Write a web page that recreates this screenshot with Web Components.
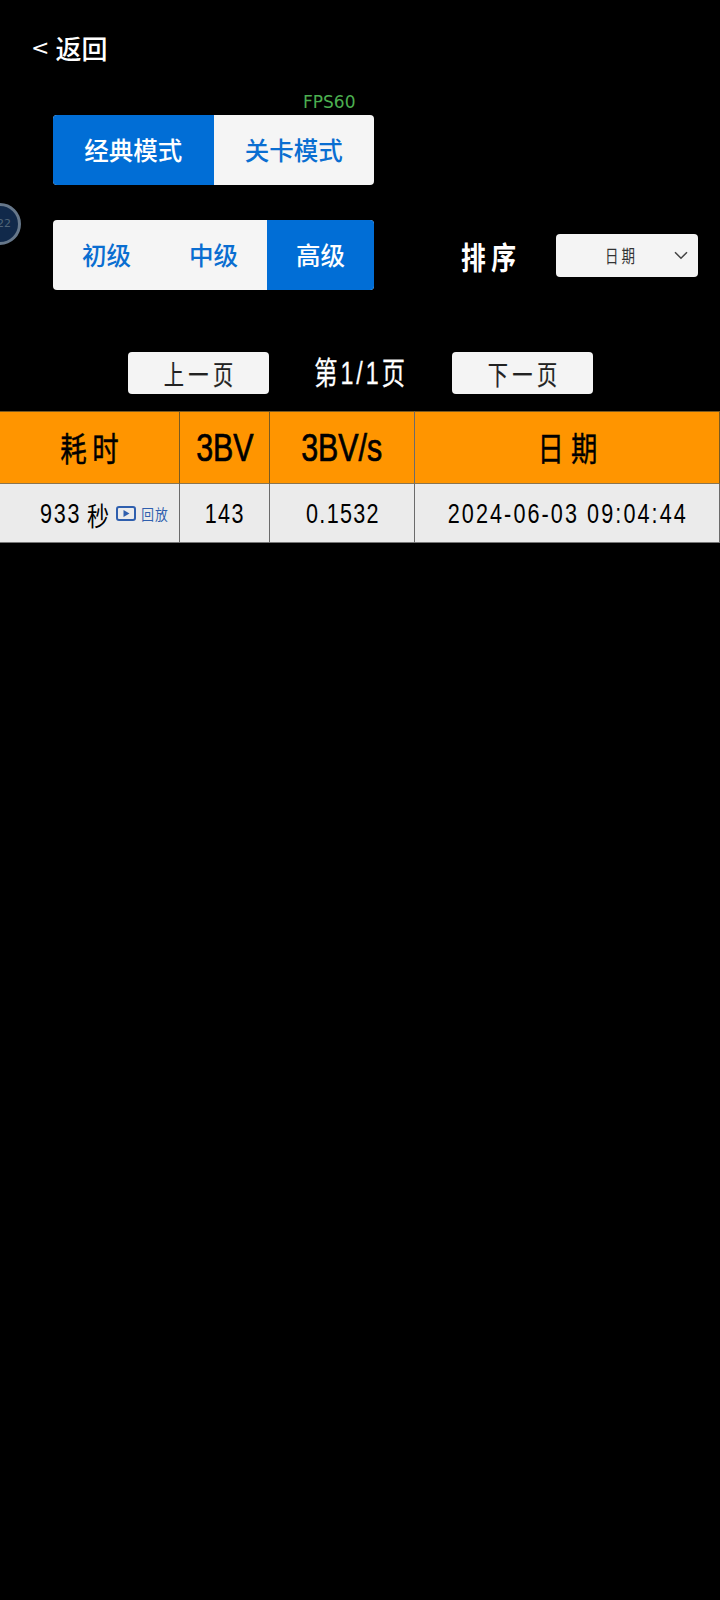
<!DOCTYPE html>
<html lang="zh-CN"><head><meta charset="utf-8"><title>排行</title>
<style>
html,body{margin:0;padding:0;background:#000;}
body{font-family:"Noto Sans CJK SC","Noto Sans",sans-serif;width:720px;height:1600px;overflow:hidden;position:relative;}
</style></head><body>
<x-page></x-page>
<script>
const CJK='"Noto Sans CJK SC","Noto Sans",sans-serif';
const LS='"Liberation Sans",sans-serif';
const sheet=(el,html)=>{el.attachShadow({mode:'open'}).innerHTML=html;};
/* Tall, narrow, aliased text */
class XPx extends HTMLElement{
  connectedCallback(){
    const s=this.getAttribute('size')||20, x=this.getAttribute('sx')||.75, ls=this.getAttribute('ls')||0, f=this.getAttribute('font')||CJK, w=this.getAttribute('weight')||400, st=this.getAttribute('stroke')||0;
    sheet(this,`<style>
    :host{display:inline-flex;justify-content:center;align-items:center;white-space:nowrap;line-height:1;filter:url(#t);}
    span{display:inline-block;font:${w} ${s}px/1 ${f};letter-spacing:${ls}px;margin-right:-${ls}px;transform:scaleX(${x});transform-origin:calc(50% - ${ls/2}px) 50%;-webkit-text-stroke:${st}px currentColor;}
    svg{position:absolute;width:0;height:0}
    </style><svg aria-hidden="true"><filter id="t" color-interpolation-filters="sRGB" x="-10%" y="-10%" width="120%" height="120%"><feComponentTransfer><feFuncA type="discrete" tableValues="0 1 1"/></feComponentTransfer></filter></svg><span><slot></slot></span>`);
  }
}
customElements.define('x-px',XPx);
class XBack extends HTMLElement{connectedCallback(){sheet(this,`<style>
  :host{display:flex;align-items:center;height:40px;padding-left:31px;color:#fff;font:500 26px/40px ${CJK};}
  i{font:400 22px/40px "DejaVu Sans",sans-serif;margin-right:6px;font-style:normal}
  </style><i>&lt;</i><span>返回</span>`);}}
customElements.define('x-back',XBack);
class XSeg extends HTMLElement{connectedCallback(){
  const items=this.getAttribute('items').split(','),a=+this.getAttribute('active');
  sheet(this,`<style>
  :host{display:flex;width:321px;height:70px;border-radius:4px;overflow:hidden;background:#f5f5f5;color:#0a6ed1;font:500 24.5px/70px ${CJK};}
  div{flex:1;text-align:center}
  .on{background:#016ed6;color:#fff}
  </style>`+items.map((t,i)=>`<div class="${i===a?'on':''}">${t}</div>`).join(''));
}}
customElements.define('x-seg',XSeg);
class XBtn extends HTMLElement{connectedCallback(){sheet(this,`<style>
  :host{display:flex;align-items:center;justify-content:center;width:141px;height:42px;border-radius:4px;background:#f4f4f4;color:#222;}
  </style><slot></slot>`);}}
customElements.define('x-btn',XBtn);
class XSelect extends HTMLElement{connectedCallback(){sheet(this,`<style>
  :host{display:flex;align-items:center;width:142px;height:43px;border-radius:4px;background:#f4f4f4;color:#333;box-sizing:border-box;padding-left:44px;position:relative}
  svg{margin-left:auto;margin-right:10px;flex:none}
  </style><slot></slot><svg width="14" height="9" viewBox="0 0 14 9"><path d="M1 1.2l6 6 6-6" fill="none" stroke="#444" stroke-width="1.5"/></svg>`);}}
customElements.define('x-select',XSelect);
class XFloat extends HTMLElement{connectedCallback(){sheet(this,`<style>
  :host{position:absolute;left:-21px;top:203px;width:42px;height:42px;box-sizing:border-box;border-radius:50%;border:3px solid #66778a;background:#11294a;color:#4f6478;font:400 11px/36px "DejaVu Sans",sans-serif;text-align:right;padding-right:7px;}
  </style>22`);}}
customElements.define('x-float',XFloat);
class XTable extends HTMLElement{connectedCallback(){sheet(this,`<style>
  :host{display:grid;grid-template-columns:180px 90px 144px 306px;grid-template-rows:73px 59px;width:720px;}
  div{box-sizing:border-box;display:flex;align-items:center;justify-content:center;border-right:1px solid #6b6b6b;border-bottom:1px solid #777;}
  .h{background:#ff9500;color:#000;border-top:1px solid #7a5a20;border-right-color:#7a5a20;border-bottom-color:#8a7550}
  .c{background:#ebebeb;color:#000;padding-top:3px}
  .c .rep{margin-top:-3px}
  div:nth-child(4n+1){border-left:1px solid #6b6b6b}
  div:nth-child(4n){border-right:0}
  .first{padding-left:26px}
  .rep{color:#2f5fae;display:flex;align-items:center;margin-left:5px}
  svg{flex:none;margin-right:3px}
  </style>
  <div class="h"><x-px size="33" sx=".8" ls="7" stroke=".5">耗时</x-px></div>
  <div class="h"><x-px size="38" sx=".8" stroke=".7" font='${LS}'>3BV</x-px></div>
  <div class="h"><x-px size="38" sx=".8" stroke=".7" font='${LS}'>3BV/s</x-px></div>
  <div class="h"><x-px size="33" sx=".8" ls="9" stroke=".4">日期</x-px></div>
  <div class="c first"><x-px size="27" sx=".8" ls="2.2" font='${LS}'>933</x-px><x-px size="26" sx=".85" style="margin-left:0">秒</x-px><span class="rep"><svg width="20" height="15" viewBox="0 0 20 15"><rect x="1" y="1" width="18" height="13" rx="2" fill="none" stroke="#2f5fae" stroke-width="2"/><path d="M7.5 4l6 3.5-6 3.5z" fill="#2f5fae"/></svg><x-px size="15" sx=".85" ls="1">回放</x-px></span></div>
  <div class="c"><x-px size="27" sx=".8" ls="1.6" font='${LS}'>143</x-px></div>
  <div class="c"><x-px size="27" sx=".8" ls="1.6" font='${LS}'>0.1532</x-px></div>
  <div class="c"><x-px size="27" sx=".8" ls="2.6" font='${LS}'>2024-06-03 09:04:44</x-px></div>`);}}
customElements.define('x-table',XTable);
class XPage extends HTMLElement{connectedCallback(){sheet(this,`<style>
  :host{display:block;width:720px;height:1600px;background:#000;color:#fff;position:relative;padding-top:28px;box-sizing:border-box}
  .fps{margin:23px 0 0 303px;height:22px;color:#4caf50;font:400 17px/22px "DejaVu Sans",sans-serif;}
  .s1{margin:2px 0 0 53px}
  .row{display:flex;align-items:center;margin:35px 0 0 53px;}
  .sort{margin-left:86px;width:57px;display:flex;justify-content:center}
  x-select{margin-left:39px}
  .pager{display:flex;align-items:center;margin:62px 0 17px 127.5px;}
  .pg{width:183px;display:flex;justify-content:center}
  </style>
  <x-back></x-back>
  <div class="fps">FPS60</div>
  <x-seg class="s1" items="经典模式,关卡模式" active="0"></x-seg>
  <div class="row"><x-seg items="初级,中级,高级" active="2"></x-seg>
    <div class="sort"><x-px size="31" sx=".8" ls="7" weight="700">排序</x-px></div>
    <x-select><x-px size="18" sx=".75" ls="4">日期</x-px></x-select></div>
  <div class="pager"><x-btn><x-px size="27" sx=".75" ls="6" stroke=".2">上一页</x-px></x-btn>
    <div class="pg"><x-px size="31" sx=".75" ls="4" stroke=".3" font='"Liberation Sans","Noto Sans CJK SC",sans-serif'>第1/1页</x-px></div>
    <x-btn><x-px size="27" sx=".75" ls="6" stroke=".2">下一页</x-px></x-btn></div>
  <x-table></x-table>
  <x-float></x-float>`);}}
customElements.define('x-page',XPage);
</script></body></html>
